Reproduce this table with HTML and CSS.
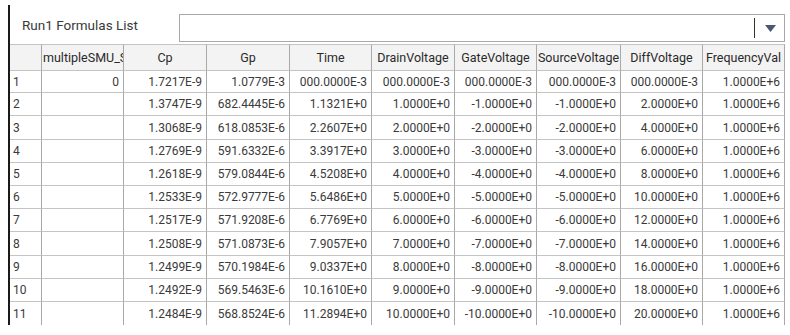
FILE: index.html
```html
<!DOCTYPE html>
<html>
<head>
<meta charset="utf-8">
<link rel="stylesheet" href="styles.css">
</head>
<body>
<div class="panel">
  <div class="toolbar">
    <div class="title">Run1 Formulas List</div>
    <div class="combo">
      <div class="combo-sep"></div>
      <svg class="combo-arrow" width="11" height="7" viewBox="0 0 11 7"><polygon points="0,0 11,0 5.5,7" fill="#4a5870"/></svg>
    </div>
  </div>
  <div class="grid">
    <div class="hc"></div><div class="hc clip">multipleSMU_S</div><div class="hc">Cp</div><div class="hc">Gp</div><div class="hc">Time</div><div class="hc">DrainVoltage</div><div class="hc">GateVoltage</div><div class="hc">SourceVoltage</div><div class="hc">DiffVoltage</div><div class="hc">FrequencyVal</div>

    <div class="rn">1</div><div class="c">0</div><div class="c">1.7217E-9</div><div class="c">1.0779E-3</div><div class="c">000.0000E-3</div><div class="c">000.0000E-3</div><div class="c">000.0000E-3</div><div class="c">000.0000E-3</div><div class="c">000.0000E-3</div><div class="c">1.0000E+6</div>
    <div class="rn">2</div><div class="c"></div><div class="c">1.3747E-9</div><div class="c">682.4445E-6</div><div class="c">1.1321E+0</div><div class="c">1.0000E+0</div><div class="c">-1.0000E+0</div><div class="c">-1.0000E+0</div><div class="c">2.0000E+0</div><div class="c">1.0000E+6</div>
    <div class="rn">3</div><div class="c"></div><div class="c">1.3068E-9</div><div class="c">618.0853E-6</div><div class="c">2.2607E+0</div><div class="c">2.0000E+0</div><div class="c">-2.0000E+0</div><div class="c">-2.0000E+0</div><div class="c">4.0000E+0</div><div class="c">1.0000E+6</div>
    <div class="rn">4</div><div class="c"></div><div class="c">1.2769E-9</div><div class="c">591.6332E-6</div><div class="c">3.3917E+0</div><div class="c">3.0000E+0</div><div class="c">-3.0000E+0</div><div class="c">-3.0000E+0</div><div class="c">6.0000E+0</div><div class="c">1.0000E+6</div>
    <div class="rn">5</div><div class="c"></div><div class="c">1.2618E-9</div><div class="c">579.0844E-6</div><div class="c">4.5208E+0</div><div class="c">4.0000E+0</div><div class="c">-4.0000E+0</div><div class="c">-4.0000E+0</div><div class="c">8.0000E+0</div><div class="c">1.0000E+6</div>
    <div class="rn">6</div><div class="c"></div><div class="c">1.2533E-9</div><div class="c">572.9777E-6</div><div class="c">5.6486E+0</div><div class="c">5.0000E+0</div><div class="c">-5.0000E+0</div><div class="c">-5.0000E+0</div><div class="c">10.0000E+0</div><div class="c">1.0000E+6</div>
    <div class="rn">7</div><div class="c"></div><div class="c">1.2517E-9</div><div class="c">571.9208E-6</div><div class="c">6.7769E+0</div><div class="c">6.0000E+0</div><div class="c">-6.0000E+0</div><div class="c">-6.0000E+0</div><div class="c">12.0000E+0</div><div class="c">1.0000E+6</div>
    <div class="rn">8</div><div class="c"></div><div class="c">1.2508E-9</div><div class="c">571.0873E-6</div><div class="c">7.9057E+0</div><div class="c">7.0000E+0</div><div class="c">-7.0000E+0</div><div class="c">-7.0000E+0</div><div class="c">14.0000E+0</div><div class="c">1.0000E+6</div>
    <div class="rn">9</div><div class="c"></div><div class="c">1.2499E-9</div><div class="c">570.1984E-6</div><div class="c">9.0337E+0</div><div class="c">8.0000E+0</div><div class="c">-8.0000E+0</div><div class="c">-8.0000E+0</div><div class="c">16.0000E+0</div><div class="c">1.0000E+6</div>
    <div class="rn">10</div><div class="c"></div><div class="c">1.2492E-9</div><div class="c">569.5463E-6</div><div class="c">10.1610E+0</div><div class="c">9.0000E+0</div><div class="c">-9.0000E+0</div><div class="c">-9.0000E+0</div><div class="c">18.0000E+0</div><div class="c">1.0000E+6</div>
    <div class="rn last">11</div><div class="c last"></div><div class="c last">1.2484E-9</div><div class="c last">568.8524E-6</div><div class="c last">11.2894E+0</div><div class="c last">10.0000E+0</div><div class="c last">-10.0000E+0</div><div class="c last">-10.0000E+0</div><div class="c last">20.0000E+0</div><div class="c last">1.0000E+6</div>
  </div>
</div>
</body>
</html>
```
FILE: styles.css
```css
html, body {
  margin: 0;
  padding: 0;
  background: #fff;
  overflow: hidden;
}
body {
  font-family: Roboto, "Liberation Sans", sans-serif;
  color: #333;
}
.panel {
  margin: 5px 0 0 8px;
  border-left: 2px solid #1a1a1a;
  width: 775px;
  height: 320px;
}
.toolbar {
  display: flex;
  align-items: center;
  height: 39px;
}
.title {
  width: 157px;
  padding-left: 12px;
  font-size: 13.5px;
  color: #3a3a3a;
  padding-top: 1px;
}
.combo {
  width: 608px;
  height: 28px;
  box-sizing: border-box;
  border: 1px solid #a8a8a8;
  display: flex;
  align-items: center;
  justify-content: flex-end;
  margin-top: 6px;
}
.combo-sep {
  width: 1px;
  height: 20px;
  background: #333;
  margin-right: 10px;
}
.combo-arrow {
  margin-right: 8px;
  margin-top: 1px;
}
.grid {
  display: grid;
  grid-template-columns: 32px 82px 83px 83px 82px 83px 82px 84px 82px 82px;
  grid-template-rows: 27px 22px 23px 24px 23px 23px 23px 23px 24px 23px 23px 23px;
  font-size: 12px;
}
.hc, .c, .rn {
  box-sizing: border-box;
  border-right: 1px solid #a9a9a9;
  border-bottom: 1px solid #c4c4c4;
  white-space: nowrap;
  overflow: hidden;
  display: flex;
  align-items: center;
}
.hc {
  background: #f3f3f3;
  border-top: 1px solid #c4c4c4;
  justify-content: center;
  color: #2a2a2a;
  font-size: 12.5px;
}
.hc.clip {
  justify-content: flex-start;
  padding-left: 1px;
}
.c {
  justify-content: flex-end;
  padding-right: 4px;
  color: #3a3a3a;
}
.rn {
  justify-content: flex-start;
  padding-left: 3px;
  color: #3a3a3a;
}
.last {
  border-bottom: none;
}
```
